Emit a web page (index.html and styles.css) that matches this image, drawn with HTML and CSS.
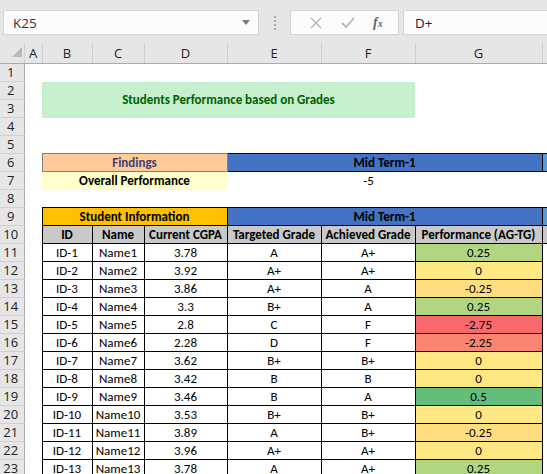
FILE: index.html
```html
<!DOCTYPE html>
<html lang="en">

<head>
  <meta charset="UTF-8" />
  <title>Students Performance based on Grades</title>
  <link rel="stylesheet" href="styles.css">
</head>

<body>
  <div class="formula-bar">
    <div class="name-box">
      <span>K25</span>
      <svg class="drop" width="8" height="5" viewBox="0 0 8 5"><path d="M0 0h8L4 5z" fill="#7a7a7a"/></svg>
    </div>
    <div class="grip"></div>
    <div class="fx-buttons">
      <svg width="12" height="12" viewBox="0 0 12 12"><path d="M1 1l10 10M11 1L1 11" stroke="#b4b4b4" stroke-width="1.4"/></svg>
      <svg width="14" height="12" viewBox="0 0 14 12"><path d="M1 6l4 4 8-9" stroke="#b4b4b4" stroke-width="1.8" fill="none"/></svg>
      <span class="fx">f<small>x</small></span>
    </div>
    <div class="formula-input">D+</div>
  </div>

  <table class="sheet">
    <colgroup>
      <col style="width:24px">
      <col style="width:18px">
      <col style="width:50px">
      <col style="width:52px">
      <col style="width:83px">
      <col style="width:94px">
      <col style="width:94px">
      <col style="width:127px">
      <col style="width:60px">
    </colgroup>
    <thead>
      <tr>
        <th class="corner"><svg width="10" height="10" viewBox="0 0 10 10"><path d="M10 0v10H0z" fill="#b9b9b9"/></svg></th>
        <th>A</th><th>B</th><th>C</th><th>D</th><th>E</th><th>F</th><th>G</th><th>H</th>
      </tr>
    </thead>
    <tbody>
      <tr><th>1</th><td></td><td></td><td></td><td></td><td></td><td></td><td></td><td></td></tr>
      <tr><th>2</th><td></td><td class="title" colspan="5" rowspan="2">Students Performance based on Grades</td><td></td><td></td></tr>
      <tr><th>3</th><td></td><td></td><td></td></tr>
      <tr><th>4</th><td></td><td></td><td></td><td></td><td></td><td></td><td></td><td></td></tr>
      <tr><th>5</th><td></td><td></td><td></td><td></td><td></td><td></td><td></td><td></td></tr>
      <tr><th>6</th><td></td><td class="findings" colspan="3">Findings</td><td class="term" colspan="3">Mid Term-1</td><td class="term-next"></td></tr>
      <tr><th>7</th><td></td><td class="overall" colspan="3">Overall Performance</td><td class="total" colspan="3">-5</td><td></td></tr>
      <tr><th>8</th><td></td><td></td><td></td><td></td><td></td><td></td><td></td><td></td></tr>
      <tr><th>9</th><td></td><td class="info" colspan="3">Student Information</td><td class="term" colspan="3">Mid Term-1</td><td class="term-next"></td></tr>
      <tr class="heads"><th>10</th><td class="blank"></td><td>ID</td><td>Name</td><td>Current CGPA</td><td>Targeted Grade</td><td>Achieved Grade</td><td>Performance (AG-TG)</td><td class="cut"></td></tr>
      <tr class="data"><th>11</th><td class="blank"></td><td>ID-1</td><td>Name1</td><td>3.78</td><td>A</td><td>A+</td><td class="p-up">0.25</td><td class="blank"></td></tr>
      <tr class="data"><th>12</th><td class="blank"></td><td>ID-2</td><td>Name2</td><td>3.92</td><td>A+</td><td>A+</td><td class="p-zero">0</td><td class="blank"></td></tr>
      <tr class="data"><th>13</th><td class="blank"></td><td>ID-3</td><td>Name3</td><td>3.86</td><td>A+</td><td>A</td><td class="p-down">-0.25</td><td class="blank"></td></tr>
      <tr class="data"><th>14</th><td class="blank"></td><td>ID-4</td><td>Name4</td><td>3.3</td><td>B+</td><td>A</td><td class="p-up">0.25</td><td class="blank"></td></tr>
      <tr class="data"><th>15</th><td class="blank"></td><td>ID-5</td><td>Name5</td><td>2.8</td><td>C</td><td>F</td><td class="p-worst">-2.75</td><td class="blank"></td></tr>
      <tr class="data"><th>16</th><td class="blank"></td><td>ID-6</td><td>Name6</td><td>2.28</td><td>D</td><td>F</td><td class="p-bad">-2.25</td><td class="blank"></td></tr>
      <tr class="data"><th>17</th><td class="blank"></td><td>ID-7</td><td>Name7</td><td>3.62</td><td>B+</td><td>B+</td><td class="p-zero">0</td><td class="blank"></td></tr>
      <tr class="data"><th>18</th><td class="blank"></td><td>ID-8</td><td>Name8</td><td>3.42</td><td>B</td><td>B</td><td class="p-zero">0</td><td class="blank"></td></tr>
      <tr class="data"><th>19</th><td class="blank"></td><td>ID-9</td><td>Name9</td><td>3.46</td><td>B</td><td>A</td><td class="p-best">0.5</td><td class="blank"></td></tr>
      <tr class="data"><th>20</th><td class="blank"></td><td>ID-10</td><td>Name10</td><td>3.53</td><td>B+</td><td>B+</td><td class="p-zero">0</td><td class="blank"></td></tr>
      <tr class="data"><th>21</th><td class="blank"></td><td>ID-11</td><td>Name11</td><td>3.89</td><td>A</td><td>B+</td><td class="p-down">-0.25</td><td class="blank"></td></tr>
      <tr class="data"><th>22</th><td class="blank"></td><td>ID-12</td><td>Name12</td><td>3.96</td><td>A+</td><td>A+</td><td class="p-zero">0</td><td class="blank"></td></tr>
      <tr class="data"><th>23</th><td class="blank"></td><td>ID-13</td><td>Name13</td><td>3.78</td><td>A</td><td>A+</td><td class="p-up">0.25</td><td class="blank"></td></tr>
    </tbody>
  </table>
</body>

</html>
```

FILE: styles.css
```css
body {
  margin: 0;
  width: 547px;
  height: 474px;
  overflow: hidden;
  background: #fff;
  font-family: "Open Sans", "Noto Sans", sans-serif;
}

/* formula bar */

.formula-bar {
  display: flex;
  align-items: flex-start;
  height: 43px;
  box-sizing: border-box;
  padding: 10px 0 0 3px;
  background: #e6e6e6;
}

.name-box {
  display: flex;
  align-items: center;
  justify-content: space-between;
  width: 256px;
  height: 25px;
  box-sizing: border-box;
  padding: 0 8px 0 9px;
  background: #fcfcfc;
  border: 1px solid #d5d5d5;
  font-size: 13.5px;
  color: #333;
}

.grip {
  width: 2px;
  height: 14px;
  margin: 6px 12px 0 15px;
  border-left: 2px dotted #a8a8a8;
}

.fx-buttons {
  display: flex;
  align-items: center;
  justify-content: space-around;
  width: 109px;
  height: 25px;
  box-sizing: border-box;
  padding: 0 6px 0 10px;
  background: #fcfcfc;
  border: 1px solid #d5d5d5;
}

.fx {
  font-family: "Liberation Serif", serif;
  font-style: italic;
  font-weight: bold;
  font-size: 14px;
  color: #666;
}

.fx small {
  font-size: 10px;
}

.formula-input {
  flex: 1;
  height: 25px;
  box-sizing: border-box;
  margin-left: 4px;
  padding: 3px 0 0 11px;
  background: #fcfcfc;
  border: 1px solid #d5d5d5;
  border-right: 0;
  font-size: 13.5px;
  color: #222;
}

/* sheet */

.sheet {
  table-layout: fixed;
  border-collapse: collapse;
  width: 602px;
  font-family: "Carlito", "Lato", sans-serif;
  font-size: 13px;
  color: #000;
}

.sheet td {
  height: 17px;
  padding: 0;
  text-align: center;
  white-space: nowrap;
  overflow: hidden;
  line-height: 15px;
}

.sheet thead th {
  height: 18px;
  padding: 0;
  background: #e6e6e6;
  border-right: 1px solid #d0d0d0;
  border-bottom: 1px solid #ababab;
  font-family: "Open Sans", sans-serif;
  font-weight: normal;
  font-size: 13px;
  color: #222;
}

.sheet thead th.corner {
  text-align: right;
  vertical-align: bottom;
  padding: 0 2px 2px 0;
}

.sheet tbody th {
  height: 17px;
  padding: 0 2px 0 0;
  background: #e6e6e6;
  border-bottom: 1px solid #d0d0d0;
  border-right: 1px solid #ababab;
  font-family: "Open Sans", sans-serif;
  font-weight: normal;
  font-size: 13px;
  line-height: 15px;
  text-align: center;
  color: #222;
}

.title {
  background: #c6efce;
  color: #006100;
  font-weight: bold;
}

.findings {
  background: #ffcc99;
  color: #3f3f76;
  font-weight: bold;
  border: 1px solid #7f7f7f;
}

.term {
  background: #4472c4;
  font-weight: bold;
  border: 1px solid #000;
}

.term-next {
  background: #5b9bd5;
  border: 1px solid #000;
}

.overall {
  background: #ffffcc;
  font-weight: bold;
}

.total {
  padding-right: 32px !important;
}

.info {
  background: #ffc000;
  font-weight: bold;
  border: 1px solid #000;
}

.heads td {
  background: #c9c9c9;
  font-weight: bold;
  border: 1px solid #000;
}

.data td {
  border: 1px solid #000;
}

.sheet td.blank {
  background: #fff;
  border: 0;
  border-right: 1px solid #000;
}

.sheet tr td.blank:last-child {
  border-right: 0;
  border-left: 1px solid #000;
}

.sheet td.cut {
  background: #c9c9c9;
}

.p-best { background: #63be7b; }
.p-up { background: #b1d580; }
.p-zero { background: #ffe884; }
.p-down { background: #fedd81; }
.p-bad { background: #f98570; }
.p-worst { background: #f8696b; }
```
